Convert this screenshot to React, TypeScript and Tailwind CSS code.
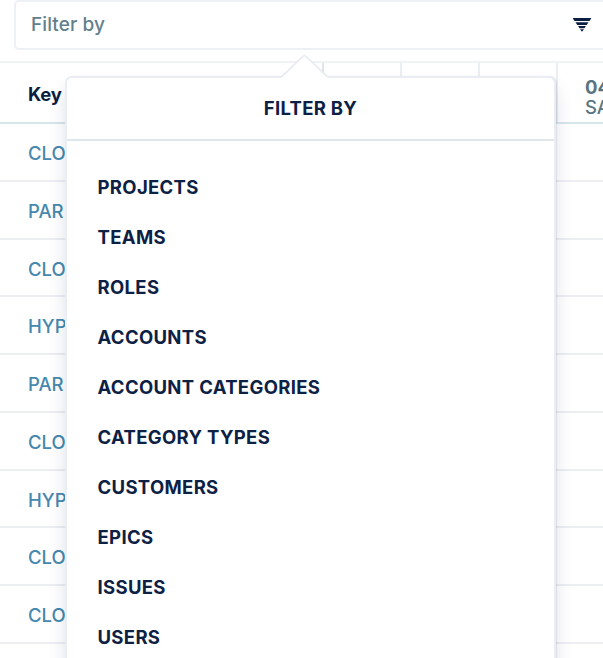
const issueKeys = ["CLO", "PAR", "CLO", "HYP", "PAR", "CLO", "HYP", "CLO", "CLO"];

const filters = [
  "PROJECTS",
  "TEAMS",
  "ROLES",
  "ACCOUNTS",
  "ACCOUNT CATEGORIES",
  "CATEGORY TYPES",
  "CUSTOMERS",
  "EPICS",
  "ISSUES",
  "USERS",
];

function FilterIcon() {
  return (
    <svg width="20" height="16" viewBox="0 0 20 16" fill="#091e42">
      <path d="M0.6 1h18.8l-1.9 3H2.5z" />
      <path d="M3.5 5.3h13l-1.8 2.6H5.3z" />
      <path d="M6.1 9h7.8l-1.4 2.2h-5z" />
      <path d="M8 12.2h4L10 14.8z" />
    </svg>
  );
}

function FilterField() {
  return (
    <div className="ml-[14px] flex h-[50px] w-[620px] shrink-0 items-center justify-between rounded-[5px] border-2 border-[#edf0f5] bg-white pr-[40px] pl-[15px]">
      <span className="text-[19px] leading-6 font-medium tracking-[0.1px] text-[#62808c]">Filter by</span>
      <FilterIcon />
    </div>
  );
}

function Worklog() {
  return (
    <div className="mt-[11px] w-[640px] border-t-2 border-[#f0f2f5]">
      <div className="flex h-[61px] border-b-2 border-[#d8e5eb]">
        <div className="flex w-[324px] shrink-0 items-center border-r-2 border-[#dfe5ea] pl-[28px] text-[18.5px] font-bold tracking-[-0.2px] text-[#091e42]">
          <span className="mt-1">Key</span>
        </div>
        <div className="w-[78px] shrink-0 border-r-2 border-[#ebeef2]" />
        <div className="w-[78px] shrink-0 border-r-2 border-[#ebeef2]" />
        <div className="w-[78px] shrink-0 border-r-2 border-[#ebeef2]" />
        <div className="shrink-0 pt-[14px] pl-[27px] text-[18.5px] leading-5 whitespace-nowrap text-[#587581]">
          <div className="font-bold">04</div>
          <div className="font-medium">SA</div>
        </div>
      </div>
      {issueKeys.map((key, i) => (
        <div
          key={i}
          className="flex h-[57.75px] items-center border-b-2 border-[#eceef2] pl-[28px] text-[18.5px] font-medium text-[#4688ae]"
        >
          <span className="mt-1">{key}</span>
        </div>
      ))}
    </div>
  );
}

function FilterPopover() {
  return (
    <div className="absolute top-[76px] left-[65px] h-[620px] w-[491px] rounded-[7px] border-2 border-[#eaedf3] bg-white shadow-[0_12px_18px_rgba(9,30,66,0.13),1px_0_1px_rgba(9,30,66,0.09)]">
      <svg className="absolute -top-[25px] left-[213px]" width="50" height="27" viewBox="0 0 50 27">
        <path d="M1 25L24.5 2.5L48 25V27H1z" fill="white" />
        <path d="M1 24C3 23.5 22 3 24.5 2.5C27 3 46 23.5 48 24" fill="none" stroke="#e8ebf1" strokeWidth="1.6" />
      </svg>
      <div className="flex h-[63px] items-center justify-center border-b-2 border-[#dfe7ed] text-[18.5px] font-bold tracking-[0.3px] text-[#0d2145]">
        <span className="mt-px">FILTER BY</span>
      </div>
      <ul className="pt-[22px] pl-[30.5px]">
        {filters.map((name) => (
          <li key={name} className="flex h-[50px] items-center text-[18.5px] font-bold tracking-[0.33px] text-[#0d2145]">
            {name}
          </li>
        ))}
      </ul>
    </div>
  );
}

export default function App() {
  return (
    <div className="relative flex h-[658px] w-[603px] flex-col overflow-hidden bg-white font-['Inter','Liberation_Sans',sans-serif]">
      <FilterField />
      <Worklog />
      <FilterPopover />
    </div>
  );
}
